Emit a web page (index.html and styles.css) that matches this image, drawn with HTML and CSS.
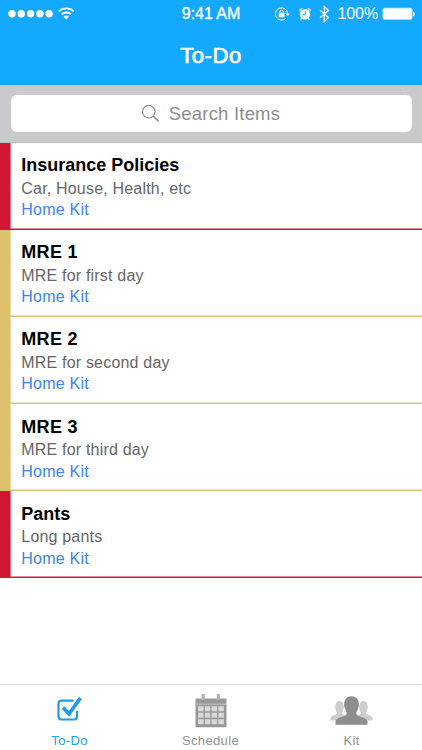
FILE: index.html
```
<!DOCTYPE html>
<html lang="en">
<head>
<meta charset="utf-8">
<title>To-Do</title>
<link rel="stylesheet" href="styles.css">
</head>
<body>
<div class="app">
  <header class="header">
    <div class="status">
      <div class="status-left">
        <svg width="68" height="16" viewBox="0 0 68 16" fill="#fff">
          <circle cx="4" cy="7.700" r="3.700"/><circle cx="13.300" cy="7.700" r="3.700"/><circle cx="22.600" cy="7.700" r="3.700"/><circle cx="31.900" cy="7.700" r="3.700"/><circle cx="41.100" cy="7.700" r="3.700"/>
          <path d="M55.700 10.700a3.500 3.500 0 0 1 5.200 0L58.300 13.500z"/>
          <path d="M50.900 5.400a10.700 10.700 0 0 1 14.800 0M53.600 8.400a6.800 6.800 0 0 1 9.400 0" fill="none" stroke="#fff" stroke-width="1.800"/>
        </svg>
      </div>
      <div class="clock">9:41 AM</div>
      <div class="status-right">
        <svg width="58" height="18" viewBox="0 0 58 18" fill="none" stroke="#fff">
          <path d="M11.800 13.300a6.100 6.100 0 1 1 1.800-4.500" stroke-width="1"/>
          <path d="M11.400 8.400h4.500l-2.200 2.800z" fill="#fff" stroke="none"/>
          <rect x="4.700" y="8.100" width="5.800" height="4.100" fill="#fff" stroke="none"/>
          <path d="M5.900 8.200V6.900a1.700 1.700 0 0 1 3.400 0v1.300" stroke-width="1"/>
          <circle cx="31" cy="9.300" r="5.200" fill="#fff" stroke="none"/>
          <path d="M25.500 5.700a6 6 0 0 1 2.700-2.400M36.500 5.700a6 6 0 0 0-2.700-2.400M27.600 13.300l-1 1.400M34.400 13.300l1 1.400" stroke-width="1.400"/>
          <path d="M31.300 6v3.700h-3" stroke="#12a9ff" stroke-width="1"/>
          <path d="M46 5.200l8.500 7.400-4.200 4V1.500l4.200 4L46 12.800" stroke-width="1.300"/>
        </svg>
        <span class="percent">100%</span>
        <svg width="34" height="14" viewBox="0 0 34 14">
          <rect x=".9" y="1.100" width="29.200" height="11.400" rx="1.800" fill="#fff" stroke="#9de2ff" stroke-width=".9"/>
          <path d="M31 4.500q2 .5 2 2.500t-2 2.500z" fill="#fff"/>
        </svg>
      </div>
    </div>
    <h1 class="title">To-Do</h1>
  </header>
  <div class="search">
    <div class="field">
      <svg width="19" height="19" viewBox="0 0 19 19" fill="none" stroke="#8e8e93"><circle cx="7.800" cy="7.700" r="6.300" stroke-width="1.200"/><path d="M12.300 12.200l5.400 5.300" stroke-width="1.700"/></svg>
      <span class="placeholder">Search Items</span>
    </div>
  </div>
  <main class="list">
    <article class="item red"><h2>Insurance Policies</h2><p>Car, House, Health, etc</p><a>Home Kit</a></article>
    <article class="item gold"><h2 class="loose">MRE 1</h2><p>MRE for first day</p><a>Home Kit</a></article>
    <article class="item gold"><h2 class="loose">MRE 2</h2><p>MRE for second day</p><a>Home Kit</a></article>
    <article class="item gold"><h2 class="loose">MRE 3</h2><p>MRE for third day</p><a>Home Kit</a></article>
    <article class="item red"><h2>Pants</h2><p>Long pants</p><a>Home Kit</a></article>
  </main>
  <nav class="tabs">
    <div class="tab active">
      <svg width="46" height="36" viewBox="0 0 46 36" fill="none" stroke="#1c9cea"><path d="M26.500 7.700H14.500a3 3 0 0 0-3 3v12.800a3 3 0 0 0 3 3H27a3 3 0 0 0 3-3V18" stroke-width="2.200"/><path d="M16 14.500l6 6.300L33.500 5" stroke-width="3.700"/></svg>
      <span>To-Do</span>
    </div>
    <div class="tab">
      <svg width="46" height="36" viewBox="0 0 46 36">
        <path d="M7.500 5.500h31v28.700h-31z" fill="#989898"/>
        <path d="M13.500 1h3.300v6h-3.300zM28.700 1H32v6h-3.300z" fill="#b3b3b3"/><path d="M7.500 11.100h31" stroke="#c9c9c9"/>
        <path fill="#d9d9d9" d="M10 13.300h5.500v5H10zm6.800 0h5.500v5h-5.500zm6.800 0h5.500v5h-5.500zm6.800 0h5.500v5h-5.500zM10 19.800h5.500v5H10zm6.800 0h5.500v5h-5.500zm6.800 0h5.500v5h-5.500zm6.800 0h5.500v5h-5.500zM10 26.300h5.500v5H10zm6.800 0h5.500v5h-5.500zm6.800 0h5.500v5h-5.500zm6.800 0h5.500v5h-5.500z"/>
      </svg>
      <span>Schedule</span>
    </div>
    <div class="tab">
      <svg width="46" height="36" viewBox="0 0 46 36">
        <path d="M1.500 27.500v-2.500q.5-2 4.500-3.200 2.200-.6 2.200-2-1.500-1.500-1.700-4-.8-2 0-3 .3-4.800 4-4.800t4 4.800q.8 1 0 3-.2 2.500-1.700 4 0 1.400 2.200 2 4 1.200 4.500 3.200v2.500z" fill="#cdcdcd"/>
        <path d="M25.500 27.500v-2.500q.5-2 4.500-3.200 2.200-.6 2.200-2-1.500-1.500-1.700-4-.8-2 0-3 .3-4.800 4-4.800t4 4.800q.8 1 0 3-.2 2.500-1.700 4 0 1.400 2.200 2 4 1.200 4.500 3.200v2.500z" fill="#cdcdcd"/>
        <path d="M6.500 31.700v-3.400q.5-2.500 3.600-3.500 4.700-1.500 6.700-2.600 1.500-1 .7-3.200-1.200-1.400-1.500-4-1.600-1.700-.8-4 .2-7.700 7.300-7.700t7.300 7.700q.8 2.300-.8 4-.3 2.600-1.500 4-.8 2.200.7 3.200 2 1.100 6.700 2.600 3.100 1 3.600 3.500v3.400z" fill="#8e8e8e"/>
      </svg>
      <span>Kit</span>
    </div>
  </nav>
</div>
</body>
</html>
```
FILE: styles.css
```
* { box-sizing: border-box; }
body, h1, h2, p { margin: 0; }
body { font-family: "Liberation Sans", Arial, sans-serif; background: #fff; }
svg { display: block; flex: none; }
.app { width: 422px; height: 750px; display: flex; flex-direction: column; overflow: hidden; }
.header { height: 84.500px; background: #12a9ff; color: #fff; flex: none; }
.status { height: 28px; display: grid; grid-template-columns: 160px 102px 160px; align-items: center; }
.status-left { padding-left: 8px; }
.clock { text-align: center; font-size: 16px; -webkit-text-stroke: .35px #fff; letter-spacing: -.05px; white-space: nowrap; line-height: 28px; }
.status-right { display: flex; align-items: center; padding-left: 11.500px; }
.percent { font-size: 16px; width: 40px; margin-left: 6px; margin-right: 4px; letter-spacing: -.1px; }
.title { font-size: 22px; line-height: 28px; padding-top: 14px; text-align: center; font-weight: 400; -webkit-text-stroke: .7px #fff; letter-spacing: .6px; }
.search { height: 58px; flex: none; background: #c9c9ce; padding: 10.500px 10.500px 10px; border-bottom: 1px solid #c0c0c5; }
.field { height: 37px; border-radius: 6px; background: #fff; display: flex; align-items: center; justify-content: center; gap: 9px; padding-right: 1px; }
.placeholder { color: #8e8e93; font-size: 18.500px; letter-spacing: .2px; line-height: 36px; }
.list { flex: 1; }
.item { height: 87.200px; padding: 11.500px 0 0 21.300px; display: flex; flex-direction: column; background: linear-gradient(var(--accent), var(--accent)) 0 0 / 10.600px 100% no-repeat; box-shadow: inset 0 -1.400px var(--line); }
.red { --accent: #d01735; --line: #d01735; }
.gold { --accent: #e0c16b; --line: #dcc078; }
.item h2 { font-size: 18px; line-height: 22px; color: #000; }
.item .loose { letter-spacing: .3px; }
.item p { font-size: 16px; line-height: 22px; padding-top: 1.500px; height: 22.500px; color: #666; letter-spacing: .19px; }
.item a { font-size: 16px; line-height: 22px; padding-top: .5px; color: #3d84f2; letter-spacing: .22px; display: block; }
.tabs { height: 66px; border-top: 1.500px solid #dedede; display: grid; grid-template-columns: 139px 143px 139px; background: #fff; flex: none; }
.tab { display: flex; flex-direction: column; align-items: center; padding-top: 8px; color: #929292; font-size: 13px; line-height: 16px; letter-spacing: .35px; }
.tab span { padding-top: 3.500px; }
.active { color: #229fec; }
```
